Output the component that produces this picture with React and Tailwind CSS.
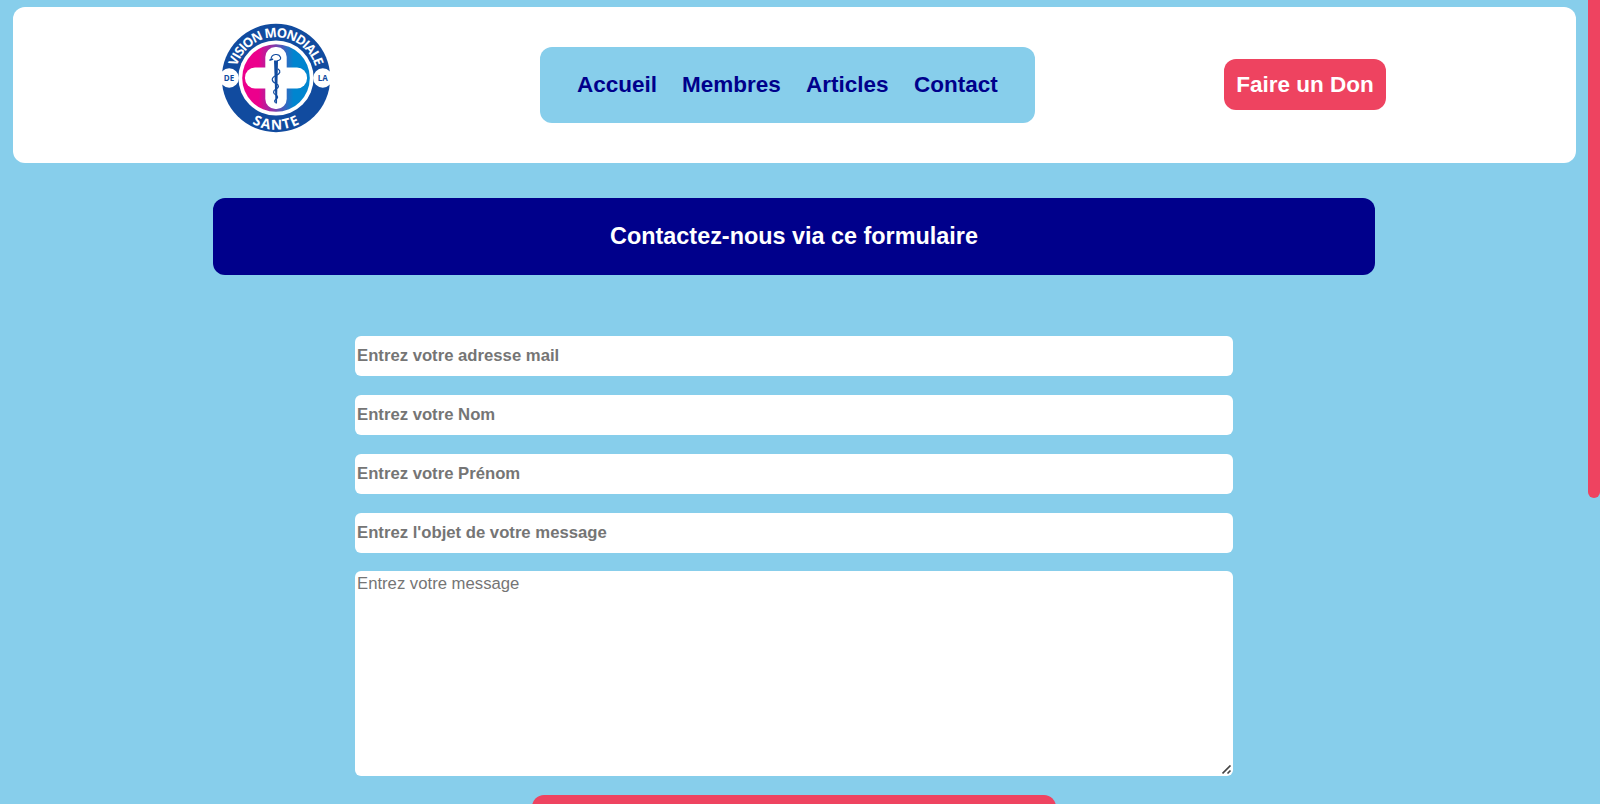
const links = [
  { label: "Accueil", width: "w-[105px]" },
  { label: "Membres", width: "w-[124px]" },
  { label: "Articles", width: "w-[108px]" },
  { label: "Contact", width: "w-[85px]" },
];

const fields = [
  { type: "email", placeholder: "Entrez votre adresse mail" },
  { type: "text", placeholder: "Entrez votre Nom" },
  { type: "text", placeholder: "Entrez votre Prénom" },
  { type: "text", placeholder: "Entrez l'objet de votre message" },
];

function Logo() {
  return (
    <svg viewBox="-55 -55 110 110" className="h-[110px] w-[110px] shrink-0">
      <defs>
        <linearGradient id="disk" x1="0" x2="1" y1="0" y2="0">
          <stop offset="0.24" stopColor="#ec008c" />
          <stop offset="0.76" stopColor="#0085cf" />
        </linearGradient>
        <path id="arc-top" d="M-40.8 0A40.8 40.8 0 0 1 40.8 0" />
        <path id="arc-bottom" d="M-51.6 0A51.6 51.6 0 0 0 51.6 0" />
      </defs>
      <circle r="54.2" fill="#114b9f" />
      <circle r="37.6" fill="#fff" />
      <circle r="33.8" fill="url(#disk)" />
      <rect x="-10.7" y="-31" width="21.4" height="62" rx="10" fill="#fff" />
      <rect x="-31" y="-10.4" width="62" height="20.8" rx="10" fill="#fff" />
      <circle cx="-46.8" r="9.7" fill="#fff" />
      <circle cx="46.8" r="9.7" fill="#fff" />
      <g fill="#114b9f" fontFamily="'Open Sans', sans-serif" fontWeight="700" fontSize="8" textAnchor="middle">
        <text x="-47" y="3">DE</text>
        <text x="46.8" y="3">LA</text>
      </g>
      <g fill="#fff" fontFamily="'Open Sans', sans-serif" fontWeight="700" textAnchor="middle">
        <text fontSize="13" textLength="105"><textPath href="#arc-top" startOffset="50%" textLength="105">VISION MONDIALE</textPath></text>
        <text fontSize="13.8" letterSpacing="1.4"><textPath href="#arc-bottom" startOffset="50.4%">SANTE</textPath></text>
      </g>
      <g fill="none" stroke="#114b9f" strokeLinecap="round">
        <path d="M-2-17.5H2L1 25.5H-.5Z" fill="#114b9f" stroke="none" />
        <path d="M-5-18.8C-4.5-24.5 3-25 4.6-20.5C5-18.6 3.5-17.6 1.5-17.2" strokeWidth="1.1" />
        <path d="M-6-18L-3.5-18.8" strokeWidth="1.6" />
        <path d="M2-9C5-7 4.5-4.5 0-2.5C-5.5 0-4.5 3.8 0 5.5C3.6 7.3 3 9.5 0 11C-3.5 13-3 15.5 0 17C2.3 18.5 2 20 0 21.2C-1.7 22.4-1.6 23.5-.8 24.3" strokeWidth="1.2" />
      </g>
    </svg>
  );
}

export default function App() {
  return (
    <div className="flex h-[804px] w-[1600px] items-start overflow-hidden bg-[#87ceeb] font-['Liberation_Sans',Arial,sans-serif]">
      <main className="w-[1588px] shrink-0">
        <header className="mt-[7px] mr-3 ml-[13px] flex h-[156px] items-center rounded-xl bg-white pl-[208px]">
          <div className="mb-[14px] w-[319px]">
            <Logo />
          </div>
          <nav className="flex h-[76px] w-[495px] items-center rounded-xl bg-[#87ceeb] pl-[37px] text-[22.5px] font-bold text-[#00008b]">
            {links.map((link) => (
              <a key={link.label} href="#" className={link.width}>
                {link.label}
              </a>
            ))}
          </nav>
          <button className="mb-px ml-[189px] h-[51px] w-[162px] rounded-xl bg-[#ee4360] text-[22.5px] font-bold whitespace-nowrap text-white">
            Faire un Don
          </button>
        </header>

        <h1 className="mt-[35px] ml-[213px] flex h-[77px] w-[1162px] items-center justify-center rounded-xl bg-[#00008b] pt-px text-[23.4px] font-bold text-white">
          Contactez-nous via ce formulaire
        </h1>

        <form className="mt-[61px] ml-[355px] flex w-[878px] flex-col">
          {fields.map((field) => (
            <input
              key={field.placeholder}
              type={field.type}
              placeholder={field.placeholder}
              className="mb-[19px] h-10 rounded-md bg-white px-[2px] text-[16.7px] font-bold outline-none placeholder:text-[#757575]"
            />
          ))}
          <div className="relative -mt-px flex h-[205px]">
            <textarea
              placeholder="Entrez votre message"
              className="h-full w-full resize-none rounded-md bg-white px-[2px] pt-[3px] text-[16.7px] leading-[20px] outline-none placeholder:text-[#757575]"
            />
            <svg viewBox="0 0 10 10" className="absolute right-px bottom-px h-[10px] w-[10px]">
              <path d="M.5 8.5L8.5 .5M5.5 8.5L8.5 5.5" fill="none" stroke="#444" strokeWidth="1.7" />
            </svg>
          </div>
          <button
            type="submit"
            className="mt-[19px] h-[51px] w-[524px] shrink-0 self-center rounded-xl bg-[#ee4360]"
            aria-label="Envoyer"
          />
        </form>
      </main>
      <div className="h-[498px] w-3 shrink-0 rounded-b-full bg-[#ee4360]" />
    </div>
  );
}
